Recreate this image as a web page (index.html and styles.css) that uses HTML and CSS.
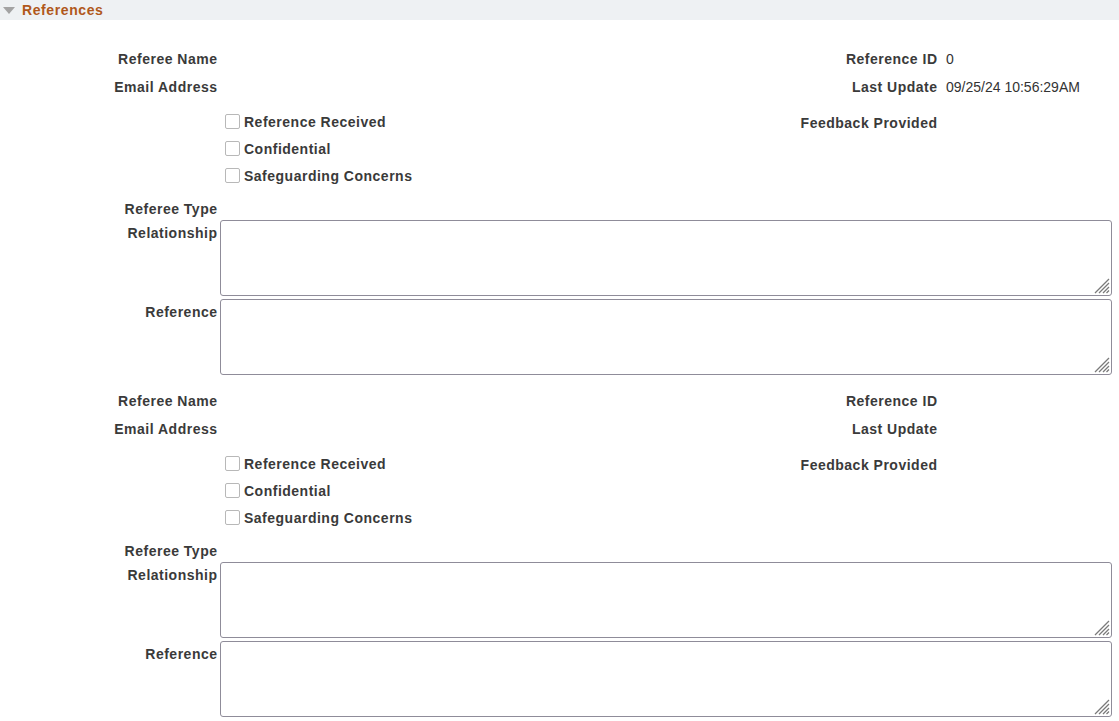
FILE: index.html
```html
<!DOCTYPE html>
<html>
<head>
<meta charset="utf-8">
<title>References</title>
<link rel="stylesheet" href="styles.css">
</head>
<body>
<div class="hdr"><span class="tri"></span><span class="hdr-title">References</span></div>

<div class="block first">
  <div class="row r28"><span class="lbl">Referee Name</span><span></span><span class="lbl">Reference ID</span><span class="val">0</span></div>
  <div class="row r28"><span class="lbl">Email Address</span><span></span><span class="lbl">Last Update</span><span class="val">09/25/24 10:56:29AM</span></div>
  <div class="row r27 cbfirst"><span></span><label class="cb"><input type="checkbox"><span class="lbl">Reference Received</span></label><span class="lbl fb">Feedback Provided</span><span></span></div>
  <div class="row r27"><span></span><label class="cb"><input type="checkbox"><span class="lbl">Confidential</span></label><span></span><span></span></div>
  <div class="row r27"><span></span><label class="cb"><input type="checkbox"><span class="lbl">Safeguarding Concerns</span></label><span></span><span></span></div>
  <div class="typerow"><span class="lbl">Referee Type</span></div>
  <div class="tarow"><span class="lbl talbl">Relationship</span><div class="ta-wrap"><textarea></textarea><svg class="grip" viewBox="0 0 16 16"><path d="M1 15L15 1M5 15L15 5M9 15L15 9M12.5 15L15 12.5"/></svg></div></div>
  <div class="tarow second"><span class="lbl talbl">Reference</span><div class="ta-wrap"><textarea></textarea><svg class="grip" viewBox="0 0 16 16"><path d="M1 15L15 1M5 15L15 5M9 15L15 9M12.5 15L15 12.5"/></svg></div></div>
</div>

<div class="block">
  <div class="row r28"><span class="lbl">Referee Name</span><span></span><span class="lbl">Reference ID</span><span class="val"></span></div>
  <div class="row r28"><span class="lbl">Email Address</span><span></span><span class="lbl">Last Update</span><span class="val"></span></div>
  <div class="row r27 cbfirst"><span></span><label class="cb"><input type="checkbox"><span class="lbl">Reference Received</span></label><span class="lbl fb">Feedback Provided</span><span></span></div>
  <div class="row r27"><span></span><label class="cb"><input type="checkbox"><span class="lbl">Confidential</span></label><span></span><span></span></div>
  <div class="row r27"><span></span><label class="cb"><input type="checkbox"><span class="lbl">Safeguarding Concerns</span></label><span></span><span></span></div>
  <div class="typerow"><span class="lbl">Referee Type</span></div>
  <div class="tarow"><span class="lbl talbl">Relationship</span><div class="ta-wrap"><textarea></textarea><svg class="grip" viewBox="0 0 16 16"><path d="M1 15L15 1M5 15L15 5M9 15L15 9M12.5 15L15 12.5"/></svg></div></div>
  <div class="tarow second"><span class="lbl talbl">Reference</span><div class="ta-wrap"><textarea></textarea><svg class="grip" viewBox="0 0 16 16"><path d="M1 15L15 1M5 15L15 5M9 15L15 9M12.5 15L15 12.5"/></svg></div></div>
</div>
</body>
</html>
```
FILE: styles.css
```css
html, body {
  margin: 0;
  padding: 0;
  background: #fff;
}
body {
  font-family: "Liberation Sans", Arial, sans-serif;
  font-size: 14px;
  color: #333;
  width: 1119px;
}
.hdr {
  height: 20px;
  background: #eef1f3;
  display: flex;
  align-items: center;
}
.tri {
  width: 0;
  height: 0;
  border-left: 6px solid transparent;
  border-right: 6px solid transparent;
  border-top: 7px solid #a3a3a3;
  margin-left: 3px;
  margin-right: 7px;
}
.hdr-title {
  font-weight: bold;
  color: #b0581b;
  letter-spacing: 0.6px;
}
.block {
  display: flex;
  flex-direction: column;
  padding-right: 7px;
  padding-top: 12px;
}
.block.first {
  padding-top: 25px;
}
.lbl {
  font-weight: bold;
  letter-spacing: 0.5px;
  color: #3a3a3a;
  white-space: nowrap;
}
.row {
  display: grid;
  grid-template-columns: 217px 554px 150px 1fr;
  column-gap: 8px;
  align-items: center;
}
.row > .lbl {
  text-align: right;
  margin-right: -0.5px;
}
.r28 { height: 28px; }
.r27 { height: 27px; }
.cbfirst { margin-top: 7px; }
.fb { position: relative; top: 1px; }
.val {
  color: #333;
  padding-left: 1px;
}
.cb {
  display: flex;
  align-items: center;
}
.cb input {
  appearance: none;
  -webkit-appearance: none;
  width: 15px;
  height: 15px;
  margin: 0 4px 0 0;
  border: 1px solid #b8b8b8;
  border-radius: 2px;
  background: #fff;
}
.typerow {
  margin-top: 10px;
  height: 20px;
  display: flex;
  align-items: center;
  width: 217px;
  justify-content: flex-end;
}
.typerow .lbl {
  margin-right: -0.5px;
}
.tarow {
  display: grid;
  grid-template-columns: 217px 1fr;
  column-gap: 3px;
  margin-top: 1px;
}
.tarow.second {
  margin-top: 3px;
}
.talbl {
  text-align: right;
  padding-top: 5px;
  line-height: 16px;
  margin-right: -0.5px;
}
.ta-wrap {
  position: relative;
  height: 76px;
}
textarea {
  display: block;
  box-sizing: border-box;
  height: 76px;
  width: 100%;
  margin: 0;
  border: 1px solid #8f8c99;
  border-radius: 3px;
  background: #fff;
  resize: none;
  font-family: inherit;
}
.grip {
  position: absolute;
  right: 2px;
  bottom: 2px;
  width: 16px;
  height: 16px;
  pointer-events: none;
}
.grip path {
  stroke: #7a7a7a;
  stroke-width: 1.3;
  fill: none;
}
```
